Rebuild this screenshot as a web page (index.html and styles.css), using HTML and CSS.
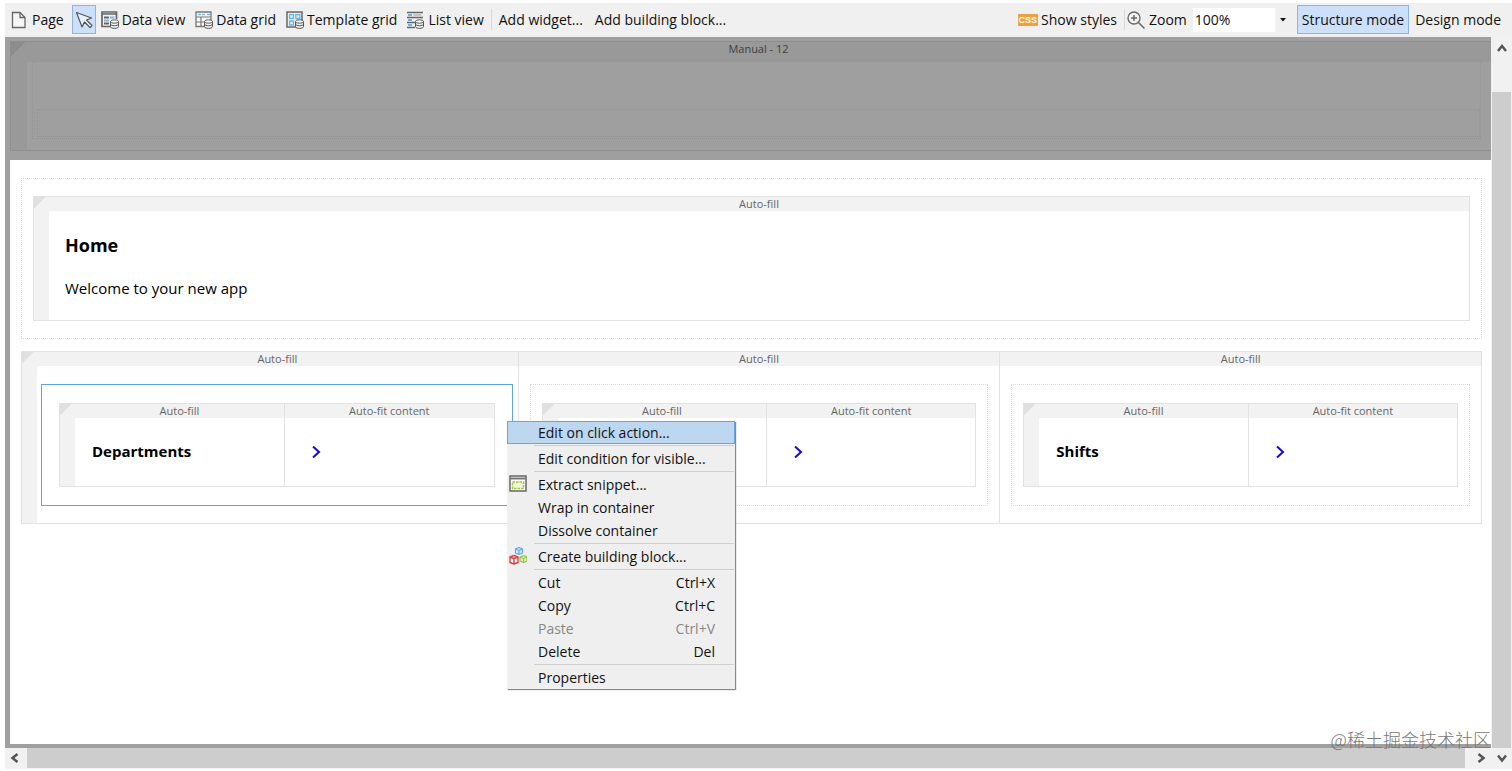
FILE: index.html
```html
<!DOCTYPE html>
<html lang="en">
<head>
<meta charset="utf-8">
<title>Page editor</title>
<link rel="stylesheet" href="styles.css">
</head>
<body>
<div class="app">
  <header class="toolbar">
    <div class="tools">
      <button class="tool"><svg class="icon" viewBox="0 0 18 18"><path d="M1.500 1.500H9l5 5v10H1.500z" fill="#f6f6f6" stroke="#666" stroke-width="1.300"/><path d="M9 1.500v5h5" fill="none" stroke="#666" stroke-width="1.300"/></svg>Page</button>
      <button class="tool picker active" aria-label="Select"><svg class="icon" viewBox="0 0 18 18"><path d="M1.500 1.500l15 5.500-5 2 5.500 5.500-2 2-5.500-5.500L7 16z" fill="#e6f0fb" stroke="#555" stroke-width="1.200" stroke-linejoin="round"/></svg></button>
      <button class="tool"><svg class="icon" viewBox="0 0 18 18"><path d="M10 15.500H1V1h14.500v7M1 3h14" fill="#f4f4f4" stroke="#666" stroke-width="1.700"/><path d="M3 6.500h5M3 12.500h5" stroke="#666" stroke-width="2"/><path d="M9 6.500h4.500M3 9.500h5" stroke="#79b8e8" stroke-width="2"/><path d="M9.500 10.500v5c0 2.500 8 2.500 8 0v-5" fill="#f4f4f4" stroke="#555"/><ellipse cx="13.500" cy="10.500" rx="4" ry="1.700" fill="#fff" stroke="#555"/><path d="M9.500 13c0 2.300 8 2.300 8 0" fill="none" stroke="#555"/></svg>Data view</button>
      <button class="tool"><svg class="icon" viewBox="0 0 18 18"><path d="M1 1h15v14.500H1z" fill="#f8f8f8" stroke="#777" stroke-width="1.300"/><path d="M3 3.500h3M7 3.500h3M12 3.500h3" stroke="#79b8e8" stroke-width="1.500"/><path d="M1 6h15M1 11h10M6 6v10" stroke="#777" stroke-width="1.200"/><path d="M9.500 10.500v5c0 2.500 8 2.500 8 0v-5" fill="#f4f4f4" stroke="#555"/><ellipse cx="13.500" cy="10.500" rx="4" ry="1.700" fill="#fff" stroke="#555"/><path d="M9.500 13c0 2.300 8 2.300 8 0" fill="none" stroke="#555"/></svg>Data grid</button>
      <button class="tool"><svg class="icon" viewBox="0 0 18 18"><path d="M1 1h15v15H1z" fill="#f8f8f8" stroke="#666" stroke-width="1.500"/><path d="M3.500 3.500h4v4h-4zM9.800 3.500h4v4h-4zM3.500 10h4v4h-4z" fill="#dceefb" stroke="#69b3e7" stroke-width="1.300"/><path d="M9.500 10.500v5c0 2.500 8 2.500 8 0v-5" fill="#f4f4f4" stroke="#555"/><ellipse cx="13.500" cy="10.500" rx="4" ry="1.700" fill="#fff" stroke="#555"/><path d="M9.500 13c0 2.300 8 2.300 8 0" fill="none" stroke="#555"/></svg>Template grid</button>
      <button class="tool"><svg class="icon" viewBox="0 0 18 18"><path d="M0 1.500h16M0 6.500h16M0 11.500h8M0 16.500h8" stroke="#666" stroke-width="1.400"/><path d="M1 4h4M1 9h4M1 14h4" stroke="#69b3e7" stroke-width="2"/><path d="M6.500 4h8" stroke="#999"/><path d="M8.500 10.500v5c0 2.500 8 2.500 8 0v-5" fill="#f4f4f4" stroke="#555"/><ellipse cx="12.500" cy="10.500" rx="4" ry="1.700" fill="#fff" stroke="#555"/><path d="M8.500 13c0 2.300 8 2.300 8 0" fill="none" stroke="#555"/></svg>List view</button>
      <span class="divider"></span>
      <button class="tool add">Add widget...</button>
      <button class="tool add">Add building block...</button>
    </div>
    <div class="tools">
      <button class="tool"><span class="css-badge">CSS</span>Show styles</button>
      <span class="divider"></span>
      <label class="zoom-label" for="zoom"><svg class="icon" viewBox="0 0 18 18"><circle cx="7" cy="7" r="6" fill="#f4f4f4" stroke="#666" stroke-width="1.300"/><path d="M11.500 11.500l6 6M4 7h6M7 4v6" stroke="#666" stroke-width="1.500"/></svg>Zoom</label>
      <div class="zoom-box">
        <select class="zoom-select" id="zoom"><option>100%</option></select>
        <svg class="caret" viewBox="0 0 8 4"><path d="M1 0h6L4 3.500z" fill="#111"/></svg>
      </div>
      <button class="tool active">Structure mode</button>
      <button class="tool mode">Design mode</button>
    </div>
  </header>

  <div class="workspace">
    <main class="canvas">
      <section class="master">
        <div class="master-grid">
          <div class="label">Manual - 12</div>
          <div class="master-slot"><div class="master-inner"></div></div>
        </div>
      </section>
      <section class="page">
        <div class="container intro">
          <div class="grid">
            <div class="cell">
              <div class="label">Auto-fill</div>
              <div class="intro-body">
                <h1 class="title">Home</h1>
                <p class="text">Welcome to your new app</p>
              </div>
            </div>
          </div>
        </div>

        <div class="grid outer">
          <div class="cell">
            <div class="label">Auto-fill</div>
            <div class="container card selected">
              <div class="grid">
                <div class="cell"><div class="label">Auto-fill</div><h2 class="card-title">Departments</h2></div>
                <div class="cell"><div class="label">Auto-fit content</div><div class="go"><svg class="chevron" viewBox="0 0 10 14"><path d="M2 1.500l6 5.500-6 5.500" fill="none" stroke="#1408d8" stroke-width="2"/></svg></div></div>
              </div>
            </div>
          </div>
          <div class="cell">
            <div class="label">Auto-fill</div>
            <div class="container card">
              <div class="grid">
                <div class="cell"><div class="label">Auto-fill</div></div>
                <div class="cell"><div class="label">Auto-fit content</div><div class="go"><svg class="chevron" viewBox="0 0 10 14"><path d="M2 1.500l6 5.500-6 5.500" fill="none" stroke="#1408d8" stroke-width="2"/></svg></div></div>
              </div>
            </div>
          </div>
          <div class="cell">
            <div class="label">Auto-fill</div>
            <div class="container card">
              <div class="grid">
                <div class="cell"><div class="label">Auto-fill</div><h2 class="card-title">Shifts</h2></div>
                <div class="cell"><div class="label">Auto-fit content</div><div class="go"><svg class="chevron" viewBox="0 0 10 14"><path d="M2 1.500l6 5.500-6 5.500" fill="none" stroke="#1408d8" stroke-width="2"/></svg></div></div>
              </div>
            </div>
          </div>
        </div>
      </section>
    </main>
    <div class="vscroll"><svg class="arrow" viewBox="0 0 10 10"><path d="M1 8l4-5 4 5" fill="none" stroke="#555" stroke-width="2.500"/></svg><div class="vthumb"></div></div>
  </div>
  <div class="hscroll">
    <svg class="arrow" viewBox="0 0 10 10"><path d="M7.500 1l-5 4 5 4" fill="none" stroke="#555" stroke-width="2.500"/></svg>
    <div class="hthumb"></div>
    <svg class="arrow" viewBox="0 0 10 10"><path d="M2.500 1l5 4-5 4" fill="none" stroke="#555" stroke-width="2.500"/></svg>
    <svg class="arrow" viewBox="0 0 10 10"><path d="M1 2.500l4 5 4-5" fill="none" stroke="#555" stroke-width="2.500"/></svg>
  </div>
</div>

<div class="menu" role="menu">
  <button class="item current" role="menuitem">Edit on click action...</button>
  <hr class="rule">
  <button class="item" role="menuitem">Edit condition for visible...</button>
  <hr class="rule">
  <button class="item" role="menuitem"><svg class="item-icon" viewBox="0 0 18 18"><path d="M1 1h16v15H1z" fill="#fff" stroke="#666" stroke-width="1.500"/><path d="M1 3.500h16" stroke="#777" stroke-width="2"/><path d="M3.500 7h11v6.500h-11z" fill="#f2f8df" stroke="#9bc53d" stroke-width="1.500" stroke-dasharray="2.500 1"/></svg>Extract snippet...</button>
  <button class="item" role="menuitem">Wrap in container</button>
  <button class="item" role="menuitem">Dissolve container</button>
  <hr class="rule">
  <button class="item" role="menuitem"><svg class="item-icon" viewBox="0 0 18 18" stroke-linejoin="round"><path d="M6.500 2l3.500-1.500L13.500 2v4L10 7.500 6.500 6zM6.500 2L10 3.500 13.500 2M10 3.500v4" fill="#d9edfb" stroke="#59a9e5" stroke-width="1.200"/><path d="M1 10l4-1.500L9 10v5.500L5 17l-4-1.500zM1 10l4 1.500L9 10M5 11.500V17" fill="#fff" stroke="#dc3e42" stroke-width="1.400"/><path d="M11 10l3.500-1.500L18 10v4l-3.500 1.500L11 14zM11 10l3.500 1.500L18 10M14.500 11.500v4" fill="#e6f3c8" stroke="#8cc63f" stroke-width="1.200"/></svg>Create building block...</button>
  <hr class="rule">
  <button class="item" role="menuitem">Cut<span class="key">Ctrl+X</span></button>
  <button class="item" role="menuitem">Copy<span class="key">Ctrl+C</span></button>
  <button class="item" role="menuitem" disabled>Paste<span class="key">Ctrl+V</span></button>
  <button class="item" role="menuitem">Delete<span class="key">Del</span></button>
  <hr class="rule">
  <button class="item" role="menuitem">Properties</button>
</div>
<div class="watermark" lang="zh">@稀土掘金技术社区</div>
</body>
</html>
```
FILE: styles.css
```css
* { box-sizing: border-box; }
body { margin: 0; background: #fff; color: #111; font: 14px/20px "Open Sans", "Noto Sans", sans-serif; }
button, select { font: inherit; color: inherit; }
h1, h2, p { margin: 0; color: #000; }
svg { display: block; flex: none; }

.app { display: flex; flex-direction: column; height: 100vh; padding: 3px 0 2px 5px; }

.toolbar { display: flex; justify-content: space-between; flex: none; height: 34px; padding: 2px 5px 3px 1px; background: #f0f0f0; }
.tools { display: flex; align-items: stretch; white-space: nowrap; }
.tool { display: flex; align-items: center; gap: 3px; padding: 1px 4px 0; border: 1px solid transparent; background: none; }
.tool.active { background: #cce0fb; border-color: #8fb4e3; }
.picker { padding: 0 2px; margin: 0 0 0 3px; }
.add { padding-right: 6px; }
.mode { padding-left: 5px; padding-right: 5px; }
.icon { width: 18px; height: 18px; }
.divider { width: 1px; margin: 4px 2px; background: #d9d9d9; }
.css-badge { padding: 0 1px; border-radius: 1px; background: #eda23f; color: #fff; font: bold 9px/12px "Liberation Sans", sans-serif; }
.zoom-label { display: flex; align-items: center; gap: 4px; padding-top: 1px; }
.zoom-box { position: relative; display: flex; align-items: center; width: 98px; margin: 3px 6px 2px 6px; background: linear-gradient(to right, #fff 82px, transparent 82px); }
.zoom-select { width: 100%; height: 100%; padding: 0 2px; border: 0; background: none; appearance: none; }
.caret { position: absolute; right: 4px; width: 8px; height: 4px; pointer-events: none; }

.workspace { display: flex; flex: 1; min-height: 0; }
.canvas { display: flex; flex-direction: column; flex: 1; padding: 0 0 4px 5px; background: #9f9f9f; }
.master { flex: none; height: 123px; padding: 4px 0 9px; }
.master-grid { height: 100%; padding: 0 10px 11px 21px; border: 1px solid #8f8f8f; border-right: 0; background: linear-gradient(135deg, #8d8d8d 10px, transparent 10px), linear-gradient(#999 20px, transparent 20px), linear-gradient(to right, #999 16px, transparent 16px); }
.master-grid .label { padding-left: 4px; background: none; color: #3f3f3f; }
.master-slot { height: 78px; margin-top: 5px; padding: 47px 0 0 4px; border: 1px dotted #949494; }
.master-inner { height: 28px; border: 1px dotted #939393; }
.page { flex: 1; padding: 18px 9px 0 11px; background: #fff; }

.container { border: 1px dotted #dcdcdc; }
.intro { padding: 17px 11px; margin-bottom: 12px; }
.grid { display: flex; padding-left: 15px; border: 1px solid #e2e2e2; background: linear-gradient(135deg, #e0e0e0 8px, transparent 8px), linear-gradient(to right, #f2f2f2 15px, transparent 15px); }
.cell { flex: 1 1 0; min-width: 0; }
.cell + .cell { border-left: 1px solid #e2e2e2; }
.label { height: 14px; background: #f2f2f2; color: #666; font-size: 11px; line-height: 14px; text-align: center; }
.intro-body { padding: 22px 16px 20px; }
.title { margin-bottom: 19px; font-size: 18px; line-height: 24px; }
.text { font-size: 15px; line-height: 24px; }
.card { margin: 18px 11px 17px; padding: 18px 11px; }
.selected { margin-left: 4px; margin-right: 5px; padding-left: 17px; padding-right: 17px; border: 1px solid #5ba3e4; }
.card .grid { height: 84px; }
.card-title { padding: 21px 17px; font-size: 15px; line-height: 24px; }
.go { padding: 27px 26px; }
.chevron { width: 10px; height: 14px; }

.vscroll { display: flex; flex-direction: column; align-items: center; gap: 39px; width: 21px; padding: 6px 1px 0; background: #f1f1f1; }
.arrow { width: 10px; height: 10px; }
.vthumb { flex: 1; width: 100%; background: #cdcdcd; }
.hscroll { display: flex; align-items: center; gap: 11px; flex: none; height: 21px; padding: 0 5px 1px; background: #f1f1f1; }
.hscroll .arrow:first-child { margin-right: -4px; }
.hthumb { flex: 1; height: 100%; background: #cdcdcd; }

.menu { position: absolute; left: 507px; top: 421px; width: 228px; background: #efefef; box-shadow: 1px 1px 1px #888; }
.item { position: relative; display: flex; align-items: center; justify-content: space-between; width: 100%; height: 23px; padding: 1px 20px 0 31px; border: 0; background: none; white-space: nowrap; }
.item.current { background: #bdd7f1; box-shadow: inset 0 0 0 1px #6da3dd; }
.item:disabled { color: #888; }
.item-icon { position: absolute; left: 2px; top: 2px; width: 18px; height: 18px; }
.rule { height: 1px; margin: 1px 1px 1px 27px; border: 0; background: #cfcfcf; }
.watermark { position: absolute; right: 21px; bottom: 20px; color: #777; font: 300 18px/24px "Noto Sans CJK SC", sans-serif; }
```
